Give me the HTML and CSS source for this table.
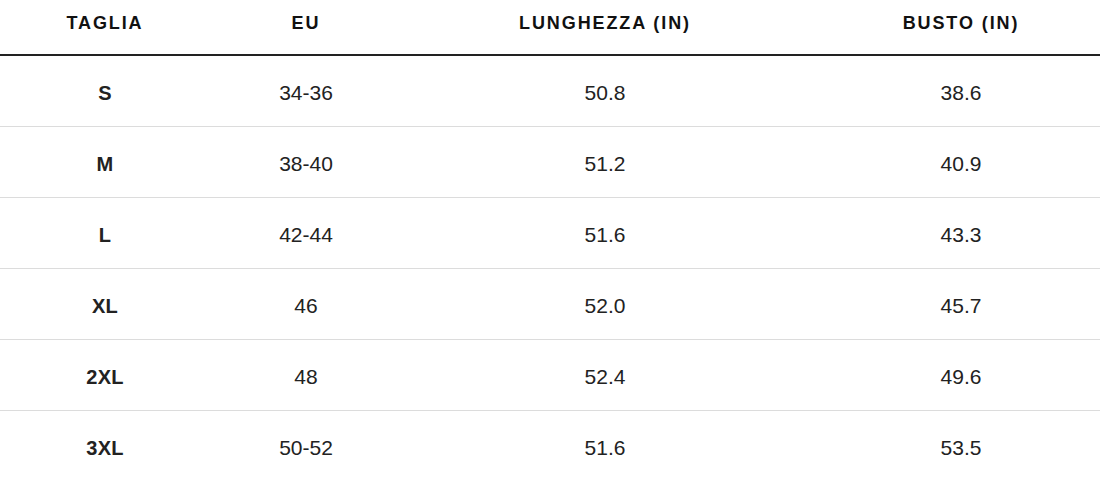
FILE: index.html
```html
<!DOCTYPE html>
<html lang="it">
<head>
<meta charset="utf-8">
<title>Tabella taglie</title>
<link rel="stylesheet" href="styles.css">
</head>
<body>
<table class="size-table">
  <colgroup>
    <col class="c-size">
    <col class="c-eu">
    <col class="c-len">
    <col class="c-bust">
  </colgroup>
  <thead>
    <tr>
      <th>TAGLIA</th>
      <th>EU</th>
      <th>LUNGHEZZA (IN)</th>
      <th class="last">BUSTO (IN)</th>
    </tr>
  </thead>
  <tbody>
    <tr><td class="size">S</td><td>34-36</td><td>50.8</td><td class="last">38.6</td></tr>
    <tr><td class="size">M</td><td>38-40</td><td>51.2</td><td class="last">40.9</td></tr>
    <tr><td class="size">L</td><td>42-44</td><td>51.6</td><td class="last">43.3</td></tr>
    <tr><td class="size">XL</td><td>46</td><td>52.0</td><td class="last">45.7</td></tr>
    <tr><td class="size">2XL</td><td>48</td><td>52.4</td><td class="last">49.6</td></tr>
    <tr><td class="size">3XL</td><td>50-52</td><td>51.6</td><td class="last">53.5</td></tr>
  </tbody>
</table>
</body>
</html>
```

FILE: styles.css
```css
html, body {
  margin: 0;
  padding: 0;
  background: #ffffff;
}

body {
  font-family: "Liberation Sans", Arial, sans-serif;
  color: #1e1e1e;
}

.size-table {
  width: 1100px;
  table-layout: fixed;
  border-collapse: collapse;
}

.c-size { width: 210px; }
.c-eu { width: 192px; }
.c-len { width: 406px; }
.c-bust { width: 292px; }

.size-table th {
  font-size: 18px;
  font-weight: 700;
  letter-spacing: 1.9px;
  line-height: 20px;
  color: #111;
  padding: 13px 0 21px;
  text-align: center;
  border-bottom: 2px solid #222;
}

.size-table td {
  font-size: 21px;
  line-height: 24px;
  padding: 25px 0 21px;
  text-align: center;
  border-bottom: 1px solid #dcdcdc;
  color: #222;
}

.size-table td.size {
  font-weight: 700;
  font-size: 20px;
  letter-spacing: 0.3px;
}

.size-table .last {
  padding-left: 14px;
}
```
